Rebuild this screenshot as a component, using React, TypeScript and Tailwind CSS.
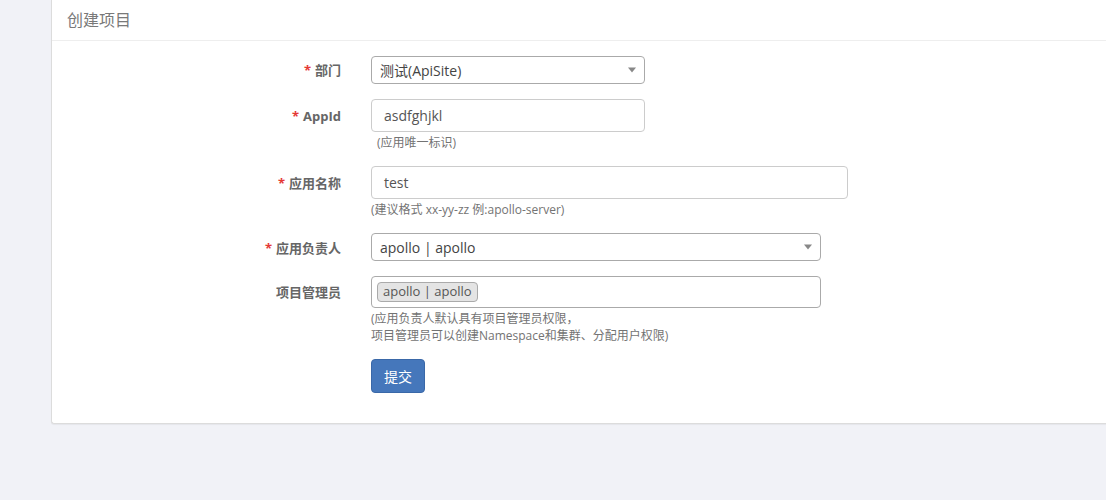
import React from "react";

const font = { fontFamily: '"Open Sans", "Noto Sans CJK SC", sans-serif' };

function Label({ text, required, h }: { text: string; required?: boolean; h: string }) {
  return (
    <div className={`w-[289px] shrink-0 flex items-center justify-end ${h}`}>
      <span className="text-[13px] font-bold text-[#666] leading-none">
        {required && <span className="text-[#e53935] mr-[4px]">*</span>}
        {text}
      </span>
    </div>
  );
}

function Arrow() {
  return (
    <span className="absolute right-[8px] top-1/2 -translate-y-1/2 w-0 h-0 border-l-[4px] border-r-[4px] border-t-[5px] border-l-transparent border-r-transparent border-t-[#888]" />
  );
}

export default function App() {
  return (
    <div className="w-[1106px] h-[500px] bg-[#f1f2f7] overflow-hidden" style={font}>
      <div className="ml-[51px] w-[1080px] bg-white border-l border-b border-[#dcdcdc] rounded-bl-[3px] shadow-[0_1px_1px_rgba(0,0,0,0.05)]">
        <div className="h-[41px] border-b border-[#eeeeee] flex items-center pl-[15px]">
          <span className="text-[16px] text-[#797979]">创建项目</span>
        </div>
        <div className="pt-[15px] pb-[30px]">
          {/* 部门 */}
          <div className="flex">
            <Label text="部门" required h="h-[28px]" />
            <div className="ml-[30px] relative w-[274px] h-[28px] border border-[#aaa] rounded-[4px] flex items-center pl-[8px] text-[14px] text-[#444]">
              测试(ApiSite)
              <Arrow />
            </div>
          </div>
          {/* AppId */}
          <div className="flex mt-[15px]">
            <Label text="AppId" required h="h-[34px]" />
            <div className="ml-[30px]">
              <div className="w-[274px] h-[33px] border border-[#ccc] rounded-[4px] flex items-center pl-[12px] text-[14px] text-[#555]">
                asdfghjkl
              </div>
              <div className="mt-[2px] pl-[6px] text-[12px] text-[#737373] leading-[17px]">(应用唯一标识)</div>
            </div>
          </div>
          {/* 应用名称 */}
          <div className="flex mt-[15px]">
            <Label text="应用名称" required h="h-[34px]" />
            <div className="ml-[30px]">
              <div className="w-[477px] h-[33px] border border-[#ccc] rounded-[4px] flex items-center pl-[12px] text-[14px] text-[#555]">
                test
              </div>
              <div className="mt-[2px] text-[12px] text-[#737373] leading-[17px]">(建议格式 xx-yy-zz 例:apollo-server)</div>
            </div>
          </div>
          {/* 应用负责人 */}
          <div className="flex mt-[15px]">
            <Label text="应用负责人" required h="h-[30px]" />
            <div className="ml-[30px] relative w-[450px] h-[28px] border border-[#aaa] rounded-[4px] flex items-center pl-[8px] text-[14px] text-[#444]">
              apollo | apollo
              <Arrow />
            </div>
          </div>
          {/* 项目管理员 */}
          <div className="flex mt-[13px]">
            <Label text="项目管理员" h="h-[32px]" />
            <div className="ml-[30px]">
              <div className="w-[450px] h-[32px] border border-[#aaa] rounded-[4px] flex items-center pl-[5px]">
                <span className="h-[20px] px-[5px] flex items-center bg-[#e4e4e4] border border-[#aaa] rounded-[4px] text-[13px] text-[#555]">
                  apollo | apollo
                </span>
              </div>
              <div className="mt-[2px] text-[12px] text-[#737373] leading-[17px]">
                (应用负责人默认具有项目管理员权限，
                <br />
                项目管理员可以创建Namespace和集群、分配用户权限)
              </div>
            </div>
          </div>
          {/* submit */}
          <div className="flex mt-[15px]">
            <div className="w-[289px] shrink-0" />
            <button className="ml-[30px] w-[54px] h-[34px] rounded-[4px] bg-[#4577bb] border border-[#3a68a8] text-white text-[14px]">
              提交
            </button>
          </div>
        </div>
      </div>
    </div>
  );
}
